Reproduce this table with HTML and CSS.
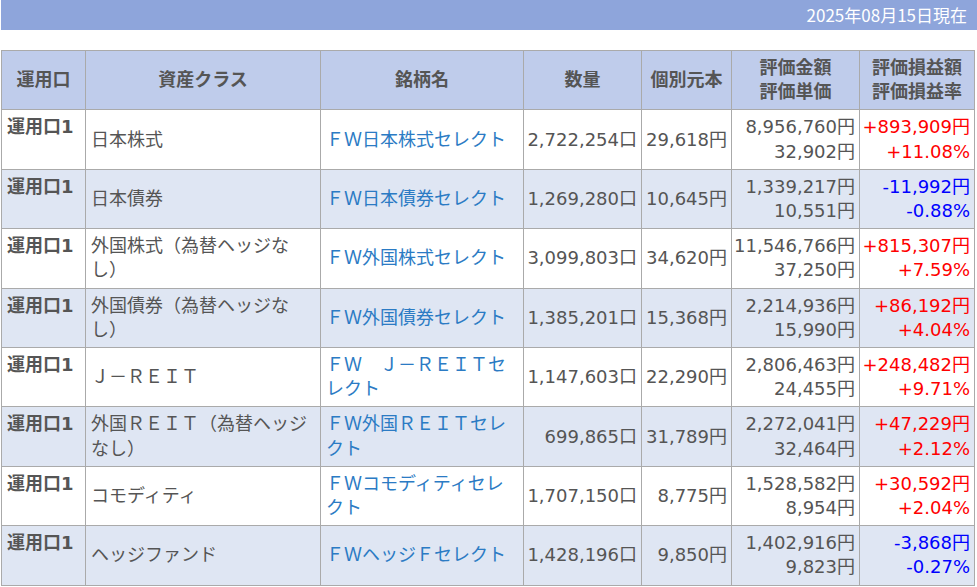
FILE: index.html
```html
<!DOCTYPE html>
<html lang="ja">
<head>
<meta charset="utf-8">
<title>保有資産</title>
<link rel="stylesheet" href="styles.css">
</head>
<body>
<div class="page">
  <div class="datebar">2025年08月15日現在</div>
  <table class="holdings">
    <colgroup>
      <col class="c1"><col class="c2"><col class="c3"><col class="c4"><col class="c5"><col class="c6"><col class="c7">
    </colgroup>
    <thead>
      <tr>
        <th>運用口</th>
        <th>資産クラス</th>
        <th>銘柄名</th>
        <th>数量</th>
        <th>個別元本</th>
        <th>評価金額<br>評価単価</th>
        <th>評価損益額<br>評価損益率</th>
      </tr>
    </thead>
    <tbody>
      <tr>
        <td class="acct">運用口1</td>
        <td>日本株式</td>
        <td><a class="fund" href="#">ＦＷ日本株式セレクト</a></td>
        <td class="num">2,722,254口</td>
        <td class="num">29,618円</td>
        <td class="num">8,956,760円<br>32,902円</td>
        <td class="num plus">+893,909円<br>+11.08%</td>
      </tr>
      <tr>
        <td class="acct">運用口1</td>
        <td>日本債券</td>
        <td><a class="fund" href="#">ＦＷ日本債券セレクト</a></td>
        <td class="num">1,269,280口</td>
        <td class="num">10,645円</td>
        <td class="num">1,339,217円<br>10,551円</td>
        <td class="num minus">-11,992円<br>-0.88%</td>
      </tr>
      <tr>
        <td class="acct">運用口1</td>
        <td>外国株式（為替ヘッジなし）</td>
        <td><a class="fund" href="#">ＦＷ外国株式セレクト</a></td>
        <td class="num">3,099,803口</td>
        <td class="num">34,620円</td>
        <td class="num">11,546,766円<br>37,250円</td>
        <td class="num plus">+815,307円<br>+7.59%</td>
      </tr>
      <tr>
        <td class="acct">運用口1</td>
        <td>外国債券（為替ヘッジなし）</td>
        <td><a class="fund" href="#">ＦＷ外国債券セレクト</a></td>
        <td class="num">1,385,201口</td>
        <td class="num">15,368円</td>
        <td class="num">2,214,936円<br>15,990円</td>
        <td class="num plus">+86,192円<br>+4.04%</td>
      </tr>
      <tr>
        <td class="acct">運用口1</td>
        <td>Ｊ－ＲＥＩＴ</td>
        <td><a class="fund" href="#">ＦＷ　Ｊ－ＲＥＩＴセレクト</a></td>
        <td class="num">1,147,603口</td>
        <td class="num">22,290円</td>
        <td class="num">2,806,463円<br>24,455円</td>
        <td class="num plus">+248,482円<br>+9.71%</td>
      </tr>
      <tr>
        <td class="acct">運用口1</td>
        <td>外国ＲＥＩＴ（為替ヘッジなし）</td>
        <td><a class="fund" href="#">ＦＷ外国ＲＥＩＴセレクト</a></td>
        <td class="num">699,865口</td>
        <td class="num">31,789円</td>
        <td class="num">2,272,041円<br>32,464円</td>
        <td class="num plus">+47,229円<br>+2.12%</td>
      </tr>
      <tr>
        <td class="acct">運用口1</td>
        <td>コモディティ</td>
        <td><a class="fund" href="#">ＦＷコモディティセレクト</a></td>
        <td class="num">1,707,150口</td>
        <td class="num">8,775円</td>
        <td class="num">1,528,582円<br>8,954円</td>
        <td class="num plus">+30,592円<br>+2.04%</td>
      </tr>
      <tr>
        <td class="acct">運用口1</td>
        <td>ヘッジファンド</td>
        <td><a class="fund" href="#">ＦＷヘッジＦセレクト</a></td>
        <td class="num">1,428,196口</td>
        <td class="num">9,850円</td>
        <td class="num">1,402,916円<br>9,823円</td>
        <td class="num minus">-3,868円<br>-0.27%</td>
      </tr>
    </tbody>
  </table>
</div>
</body>
</html>
```

FILE: styles.css
```css
html, body {
  margin: 0;
  padding: 0;
  background: #ffffff;
}

.page {
  padding-left: 1px;
  font-family: "DejaVu Sans", "Noto Sans CJK JP", sans-serif;
  color: #555555;
}

.datebar {
  height: 30px;
  line-height: 30px;
  background: #8ea5db;
  color: #ffffff;
  font-family: "Noto Sans CJK JP", sans-serif;
  font-size: 17px;
  text-align: right;
  padding-right: 10px;
  margin-bottom: 20px;
}

.holdings {
  width: 973px;
  table-layout: fixed;
  border-collapse: collapse;
  font-size: 18px;
  line-height: 24.2px;
}

.c1 { width: 84px; }
.c2 { width: 235px; }
.c3 { width: 203px; }
.c4 { width: 118px; }
.c5 { width: 90px; }
.c6 { width: 128px; }
.c7 { width: 115px; }

.holdings th,
.holdings td {
  border: 1px solid #aaaaaa;
  padding: 5px 6px 5px 5px;
  vertical-align: middle;
}

.holdings th {
  background: #bfcceb;
  font-weight: bold;
  text-align: center;
  color: #555555;
  padding-left: 4px;
  padding-right: 4px;
}

.holdings tbody tr:nth-child(odd) td {
  background: #ffffff;
}

.holdings tbody tr:nth-child(even) td {
  background: #dfe6f3;
}

.holdings td {
  text-align: left;
}

.holdings td.acct {
  font-weight: bold;
  vertical-align: top;
  padding-left: 5px;
  padding-right: 2px;
  white-space: nowrap;
}

.holdings td.num {
  text-align: right;
  white-space: nowrap;
  padding-left: 2px;
  padding-right: 4px;
}

.holdings td.plus {
  color: #ff0000;
}

.holdings td.minus {
  color: #0000ff;
}

.fund {
  color: #2b7bc4;
  text-decoration: none;
}
```
